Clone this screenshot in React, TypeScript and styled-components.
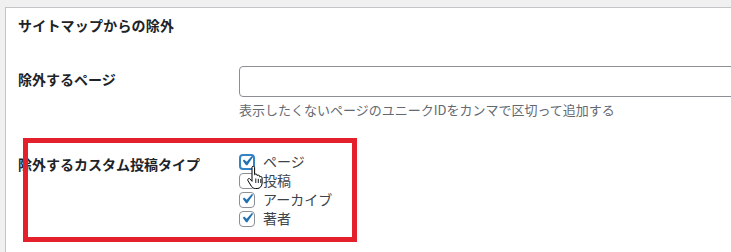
import React from "react";
import styled, { createGlobalStyle } from "styled-components";

const Global = createGlobalStyle`
  html, body {
    margin: 0;
    padding: 0;
    background: #f0f0f1;
    overflow: hidden;
    font-family: "Noto Sans CJK JP", "Noto Sans", sans-serif;
    color: #1d2327;
  }
`;

const types = [
  { label: "ページ", checked: true, focus: true },
  { label: "投稿", checked: false, focus: false },
  { label: "アーカイブ", checked: true, focus: false },
  { label: "著者", checked: true, focus: false },
];

const App = () => {
  return (
    <>
      <Global />
      <Page>
        <Panel>
          <Title>サイトマップからの除外</Title>
          <Table>
            <Label $top={3}>除外するページ</Label>
            <Field>
              <TextInput type="text" />
              <Description>表示したくないページのユニークIDをカンマで区切って追加する</Description>
            </Field>
            <Label $top={8}>除外するカスタム投稿タイプ</Label>
            <Field $top={6}>
              {types.map((t) => (
                <CheckRow key={t.label}>
                  <Box $focus={t.focus}>
                    {t.checked && (
                      <Check width="20" height="20" viewBox="0 0 20 20">
                        <path
                          d="M14.83 4.89l1.34.94-5.81 8.38H9.02L5.78 9.67l1.34-1.25 2.57 2.4z"
                          fill="#2271b1"
                        />
                      </Check>
                    )}
                  </Box>
                  <CheckText>{t.label}</CheckText>
                </CheckRow>
              ))}
            </Field>
          </Table>
          <Highlight />
          <Cursor>
            <svg width="18" height="23" viewBox="0 0 18 23">
              <path
                d="M5 1.5c0-.8.6-1.3 1.3-1.3s1.3.5 1.3 1.3v7.2c.3-.5.8-.7 1.3-.7.8 0 1.3.6 1.3 1.3v.4c.3-.4.7-.6 1.2-.6.8 0 1.3.6 1.3 1.3v.6c.3-.3.7-.5 1.1-.5.8 0 1.3.6 1.3 1.3v5.2c0 3-2 5.5-5 5.5H8.3c-1.6 0-2.8-.8-3.7-2L1 14.8c-.5-.8-.3-1.6.3-2 .6-.4 1.4-.3 1.9.3L5 15.3z"
                fill="#fff"
                stroke="#000"
                strokeWidth="1"
                strokeLinejoin="round"
              />
              <path d="M8.8 12.5v4.5M11.3 12.8v4.2M13.8 13v4" stroke="#000" strokeWidth="0.9" />
            </svg>
          </Cursor>
        </Panel>
      </Page>
    </>
  );
};

export default App;

const Page = styled.div`
  width: 731px;
  height: 252px;
  padding: 7px 0 0 5px;
  box-sizing: border-box;
`;

const Panel = styled.div`
  position: relative;
  width: 726px;
  height: 245px;
  background: #fff;
  border: 1px solid #c3c4c7;
  border-right: none;
  border-bottom: none;
  box-sizing: border-box;
  padding: 7px 0 0 12px;
  overflow: hidden;
`;

const Title = styled.h2`
  margin: 0;
  font-size: 14px;
  font-weight: 700;
  line-height: 20px;
  letter-spacing: 0.2px;
`;

const Table = styled.div`
  display: grid;
  grid-template-columns: 221px 1fr;
  row-gap: 26px;
  margin-top: 31px;
`;

const Label = styled.div<{ $top?: number }>`
  font-size: 14px;
  font-weight: 700;
  line-height: 20px;
  padding-top: ${(p) => p.$top ?? 15}px;
`;

const Field = styled.div<{ $top?: number }>`
  display: flex;
  flex-direction: column;
  padding-top: ${(p) => p.$top ?? 0}px;
`;

const TextInput = styled.input`
  width: 520px;
  height: 31px;
  box-sizing: border-box;
  border: 1px solid #8c8f94;
  border-radius: 4px;
  background: #fff;
  margin: 0;
`;

const Description = styled.p`
  margin: 3px 0 0;
  font-size: 13px;
  line-height: 20px;
  color: #646970;
`;

const CheckRow = styled.label`
  display: flex;
  align-items: center;
  height: 19px;
`;

const Box = styled.span<{ $focus: boolean }>`
  width: 16px;
  height: 16px;
  box-sizing: border-box;
  border: ${(p) => (p.$focus ? "2px solid #3582c4" : "1px solid #8c8f94")};
  border-radius: 4px;
  background: #fff;
  display: flex;
  align-items: center;
  justify-content: center;
  margin-right: 8px;
  overflow: visible;
`;

const Check = styled.svg`
  flex: none;
  margin: -2px -3px 0 -3px;
`;

const CheckText = styled.span`
  font-size: 14px;
  line-height: 19px;
  color: #3c434a;
`;

const Highlight = styled.div`
  position: absolute;
  left: 17px;
  top: 130px;
  width: 334px;
  height: 104px;
  box-sizing: border-box;
  border: 5px solid #e3202b;
`;

const Cursor = styled.div`
  position: absolute;
  left: 241px;
  top: 158px;
  line-height: 0;
`;
